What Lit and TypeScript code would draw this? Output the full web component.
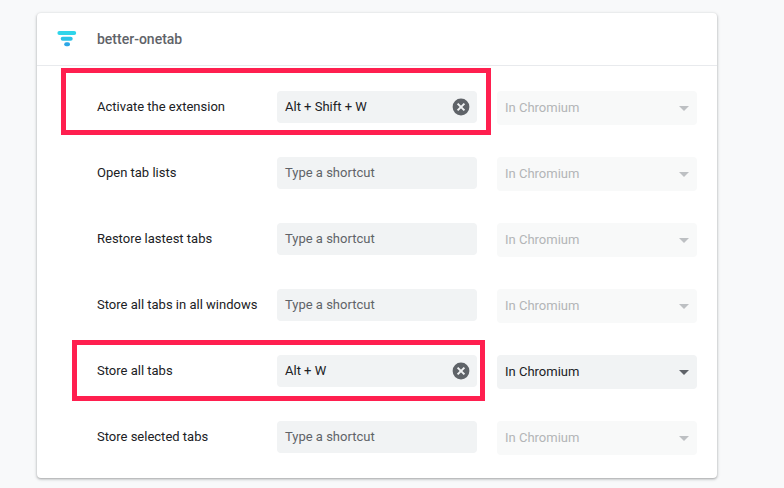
import { LitElement, html, css, svg } from "lit";
import { customElement } from "lit/decorators.js";

interface Row {
  label: string;
  value?: string;
  active?: boolean;
}

const rows: Row[] = [
  { label: "Activate the extension", value: "Alt + Shift + W" },
  { label: "Open tab lists" },
  { label: "Restore lastest tabs" },
  { label: "Store all tabs in all windows" },
  { label: "Store all tabs", value: "Alt + W", active: true },
  { label: "Store selected tabs" },
];

const logo = svg`<svg class="logo" width="20" height="18" viewBox="0 0 20 18">
  <rect x="0.4" y="1" width="18.8" height="4" rx="2" fill="#2fd5ea"></rect>
  <rect x="3.7" y="6.7" width="12" height="4" rx="2" fill="#2cc3e8"></rect>
  <rect x="7.2" y="12.3" width="5.8" height="4" rx="2" fill="#2ba6e6"></rect>
</svg>`;

const clear = svg`<svg class="clear" width="18" height="18" viewBox="0 0 18 18">
  <circle cx="9" cy="9" r="8.4" fill="#5f6368"></circle>
  <path d="M5.6 5.6 12.4 12.4M12.4 5.6 5.6 12.4" stroke="#f1f3f4" stroke-width="2" fill="none"></path>
</svg>`;

@customElement("app-root")
export class AppRoot extends LitElement {
  static styles = css`
    :host {
      display: block;
      position: relative;
      width: 784px;
      height: 488px;
      overflow: hidden;
      background: #f8f9fa;
      font-family: Roboto, "Liberation Sans", sans-serif;
      font-size: 13px;
      color: #202124;
    }
    .page {
      padding: 13px 67px 0 37px;
    }
    .card {
      background: #fff;
      border-radius: 4px;
      box-shadow: 0 1px 2px rgba(60, 64, 67, 0.3), 0 1px 3px 1px rgba(60, 64, 67, 0.15);
      height: 465px;
    }
    .head {
      display: flex;
      align-items: center;
      height: 52px;
      padding-left: 20px;
      border-bottom: 1px solid #e8eaed;
    }
    .logo {
      flex: none;
      margin-right: 20px;
    }
    .title {
      font-weight: 500;
      font-size: 14px;
      color: #5f6368;
    }
    .list {
      display: flex;
      flex-direction: column;
      gap: 32px;
      padding: 25px 20px 0 60px;
    }
    .row {
      display: flex;
      height: 34px;
    }
    .label {
      width: 180px;
      flex: none;
      line-height: 32px;
    }
    .input {
      width: 200px;
      height: 32px;
      flex: none;
      box-sizing: border-box;
      background: #f1f3f4;
      border-radius: 4px;
      padding: 0 8px;
      display: flex;
      align-items: center;
      justify-content: space-between;
    }
    .text {
      margin-bottom: 2px;
    }
    .placeholder {
      color: #5f6368;
    }
    .clear {
      flex: none;
      margin-right: -1px;
    }
    .select {
      width: 200px;
      height: 34px;
      flex: none;
      margin-left: 20px;
      box-sizing: border-box;
      background: #f1f3f4;
      border-radius: 4px;
      padding: 0 8px;
      display: flex;
      align-items: center;
      justify-content: space-between;
    }
    .select.off {
      background: #f8f9f9;
      color: #b3b5b7;
    }
    .caret {
      width: 0;
      height: 0;
      border-left: 5.5px solid transparent;
      border-right: 5.5px solid transparent;
      border-top: 5.5px solid #5f6368;
      margin-top: 1px;
    }
    .off .caret {
      border-top-color: #bdc0c3;
    }
    .mark {
      position: absolute;
      box-sizing: border-box;
      border: 5px solid #ff1f4f;
    }
    .mark.a {
      left: 61px;
      top: 68px;
      width: 430px;
      height: 67px;
    }
    .mark.b {
      left: 72px;
      top: 340px;
      width: 413px;
      height: 61px;
    }
  `;

  render() {
    return html`
      <div class="page">
        <div class="card">
          <div class="head">${logo}<span class="title">better-onetab</span></div>
          <div class="list">
            ${rows.map(
              (r) => html`
                <div class="row">
                  <div class="label">${r.label}</div>
                  <div class="input">
                    ${r.value
                      ? html`<span class="text">${r.value}</span>${clear}`
                      : html`<span class="text placeholder">Type a shortcut</span>`}
                  </div>
                  <div class="select ${r.active ? "" : "off"}">
                    <span class="text">In Chromium</span><span class="caret"></span>
                  </div>
                </div>
              `
            )}
          </div>
        </div>
      </div>
      <div class="mark a"></div>
      <div class="mark b"></div>
    `;
  }
}
